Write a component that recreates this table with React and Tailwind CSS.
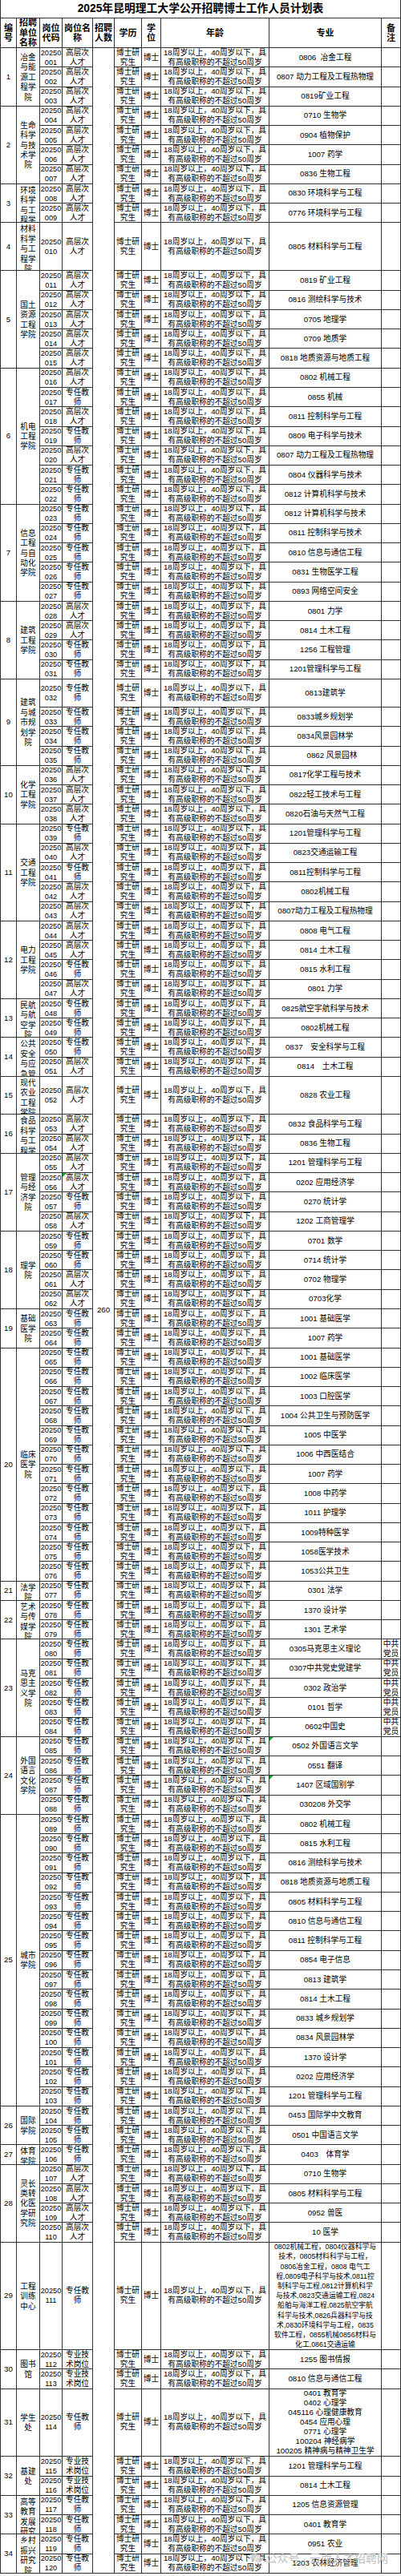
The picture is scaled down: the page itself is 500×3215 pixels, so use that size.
import React from 'react';

const G = ['高层次', '人才'];
const Z = ['专任教', '师'];
const J = ['专业技', '术岗位'];
const P = { r: true };

const TRAIN = [
  '0802机械工程，0804仪器科学与',
  '技术，0805材料科学与工程，',
  '0806冶金工程，0808 电气工',
  '程,0809电子科学与技术,0811控',
  '制科学与工程,0812计算机科学',
  '与技术,0823交通运输工程,0824',
  '船舶与海洋工程,0825航空宇航',
  '科学与技术,0826兵器科学与技',
  '术,0830环境科学与工程，0835',
  '软件工程，0855机械0856材料与',
  '化工,0861交通运输',
];

const STU = [
  '0401 教育学',
  '0402 心理学',
  '045116 心理健康教育',
  '0454 应用心理',
  '0771 心理学',
  '100204 神经病学',
  '100205 精神病与精神卫生学',
];

const UNITS = [
  ['冶金与能源工程学院', [[G, '0806  冶金工程'], [G, '0807 动力工程及工程热物理'], [G, '0819矿业工程']]],
  ['生命科学与技术学院', [[G, '0710 生物学'], [G, '0904 植物保护'], [G, '1007 药学'], [G, '0836 生物工程']]],
  ['环境科学与工程学院', [[G, '0830 环境科学与工程'], [G, '0776 环境科学与工程']]],
  ['材料科学与工程学院', [[G, '0805 材料科学与工程']]],
  ['国土资源工程学院', [[G, '0819 矿业工程'], [G, '0816 测绘科学与技术'], [G, '0705 地理学'], [G, '0709 地质学'], [G, '0818 地质资源与地质工程']]],
  ['机电工程学院', [[G, '0802 机械工程'], [Z, '0855 机械'], [G, '0811 控制科学与工程'], [Z, '0809 电子科学与技术'], [G, '0807 动力工程及工程热物理'], [Z, '0804 仪器科学与技术'], [Z, '0812 计算机科学与技术']]],
  ['信息工程与自动化学院', [[Z, '0812 计算机科学与技术'], [Z, '0811 控制科学与技术'], [Z, '0810 信息与通信工程'], [Z, '0831 生物医学工程'], [Z, '0893 网络空间安全']]],
  ['建筑工程学院', [[G, '0801 力学'], [G, '0814 土木工程'], [Z, '1256 工程管理'], [Z, '1201管理科学与工程']]],
  ['建筑与城市规划学院', [[Z, '0813建筑学'], [Z, '0833城乡规划学'], [Z, '0834风景园林学'], [Z, '0862 风景园林', { cls: 'pl-[17px]' }]]],
  ['化学工程学院', [[G, '0817化学工程与技术'], [G, '0822轻工技术与工程'], [G, '0820石油与天然气工程']]],
  ['交通工程学院', [[Z, '1201管理科学与工程'], [G, '0823交通运输工程'], [Z, '0811控制科学与工程'], [G, '0802机械工程'], [G, '0807动力工程及工程热物理']]],
  ['电力工程学院', [[G, '0808 电气工程'], [G, '0814 土木工程'], [Z, '0815 水利工程'], [G, '0801 力学']]],
  ['民航与航空学院', [[Z, '0825航空宇航科学与技术'], [Z, '0802机械工程']]],
  ['公共安全与应急管理学院', [[Z, '0837\u3000安全科学与工程'], [G, '0814\u3000土木工程']]],
  ['现代农业工程学院', [[G, '0828 农业工程']]],
  ['食品科学与工程学院', [[G, '0832 食品科学与工程'], [G, '0836 生物工程']]],
  ['管理与经济学院', [[G, '1201 管理科学与工程'], [G, '0202 应用经济学', { m4: true }], [Z, '0270 统计学'], [G, '1202 工商管理学']]],
  ['理学院', [[Z, '0701 数学'], [Z, '0714 统计学'], [G, '0702 物理学'], [G, '0703化学']]],
  ['基础医学院', [[Z, '1001 基础医学'], [Z, '1007 药学']]],
  ['临床医学院', [[Z, '1001 基础医学'], [Z, '1002 临床医学'], [Z, '1003 口腔医学'], [Z, '1004 公共卫生与预防医学'], [Z, '1005 中医学'], [Z, '1006 中西医结合'], [Z, '1007 药学'], [Z, '1008 中药学'], [Z, '1011 护理学'], [Z, '1009特种医学'], [Z, '1058医学技术'], [Z, '1053公共卫生']]],
  ['法学院', [[Z, '0301 法学']]],
  ['艺术与传媒学院', [[Z, '1370 设计学'], [Z, '1301 艺术学']]],
  ['马克思主义学院', [[Z, '0305马克思主义理论', P], [Z, '0307中共党史党建学', P], [Z, '0302 政治学', P], [Z, '0101 哲学', P], [Z, '0602中国史', P]]],
  ['外国语言文化学院', [[Z, '0502 外国语言文学', { m9: true }], [Z, '0551 翻译'], [Z, '1407 区域国别学', { m9: true }], [Z, '030208 外交学']]],
  ['城市学院', [[Z, '0802 机械工程'], [Z, '0815 水利工程'], [Z, '0816 测绘科学与技术'], [Z, '0818 地质资源与地质工程'], [Z, '0805 材料科学与工程'], [Z, '0810 信息与通信工程'], [Z, '0811 控制科学与工程'], [Z, '0854 电子信息'], [Z, '0813 建筑学'], [Z, '0814 土木工程'], [Z, '0833 城乡规划学'], [Z, '0834 风景园林学'], [Z, '1370 设计学'], [Z, '0202 应用经济学'], [Z, '1201 管理科学与工程']]],
  ['国际学院', [[Z, '0453 国际学中文教育'], [Z, '0501 中国语言文学']]],
  ['体育学院', [[Z, '0403\u3000体育学']]],
  ['灵长类转化医学研究院', [[G, '0710 生物学'], [G, '0805 材料科学与工程'], [G, '0952 兽医'], [G, '10 医学']]],
  ['工程训练中心', [[Z, TRAIN, { small: true }]]],
  ['图书馆', [[J, '1255 图书情报'], [J, '0810 信息与通信工程']]],
  ['学生处', [[Z, STU]]],
  ['基建处', [[J, '1201 管理科学与工程'], [J, '0814 土木工程']]],
  ['高等教育发展研究院', [[Z, '1205 信息资源管理'], [Z, '0401 教育学']]],
  ['乡村振兴研究院', [[Z, '0951 农业'], [Z, '1203 农林经济管理']]],
];

const RH = {
  10: 'h-[60px]',
  32: 'h-[35px]',
  52: 'h-[47.3px]',
  111: 'h-[134.3px]',
  114: 'h-[84.7px]',
};
const DEF_H = 'h-[24.28px]';

const SPAN = {
  1: '[grid-row:span_1/span_1]',
  2: '[grid-row:span_2/span_2]',
  3: '[grid-row:span_3/span_3]',
  4: '[grid-row:span_4/span_4]',
  5: '[grid-row:span_5/span_5]',
  7: '[grid-row:span_7/span_7]',
  12: '[grid-row:span_12/span_12]',
  15: '[grid-row:span_15/span_15]',
};

const LINE = 'border-r border-b border-[#333333]';

function Mark() {
  return (
    <span className="absolute left-0 top-0 w-0 h-0 border-t-[5px] border-r-[5px] border-t-[#1f9e3c] border-r-transparent" />
  );
}

function Cell({ col, h, className = '', mark, children }) {
  return (
    <div className={`${col} ${h} ${LINE} relative overflow-hidden flex flex-col items-center justify-center text-center ${className}`}>
      {mark && <Mark />}
      {children}
    </div>
  );
}

function SpanCell({ col, span, className = '', children }) {
  return (
    <div className={`${col} ${span} ${LINE}`}>
      <div className={`h-0 min-h-full overflow-hidden flex flex-col items-center [justify-content:safe_center] text-center ${className}`}>
        {children}
      </div>
    </div>
  );
}

function Lines({ items }) {
  return items.map((l, i) => (
    <span key={i} className="block whitespace-pre">
      {l}
    </span>
  ));
}

function Header() {
  const hc = 'h-[37px] font-bold text-[11px] leading-[12.4px]';
  return (
    <>
      <Cell col="col-start-1" h={hc}><Lines items={['编', '号']} /></Cell>
      <Cell col="col-start-2" h={hc}><Lines items={['招聘', '单位', '名称']} /></Cell>
      <Cell col="col-start-3" h={hc}><Lines items={['岗位', '代码']} /></Cell>
      <Cell col="col-start-4" h={hc}><Lines items={['岗位名', '称']} /></Cell>
      <Cell col="col-start-5" h={hc}><Lines items={['招聘', '人数']} /></Cell>
      <Cell col="col-start-6" h={hc}><Lines items={['学历']} /></Cell>
      <Cell col="col-start-7" h={hc}><Lines items={['学', '位']} /></Cell>
      <Cell col="col-start-8" h={hc}><Lines items={['年龄']} /></Cell>
      <Cell col="col-start-9" h={hc}><Lines items={['专业']} /></Cell>
      <Cell col="col-start-10" h={hc}><Lines items={['备', '注']} /></Cell>
    </>
  );
}

function Body() {
  const out = [];
  let idx = 0;
  UNITS.forEach(([name, rows], ui) => {
    rows.forEach(([post, major, opt = {}], ri) => {
      idx += 1;
      const code = String(idx).padStart(3, '0');
      const h = RH[idx] || DEF_H;
      if (ri === 0) {
        out.push(
          <SpanCell key={`n${ui}`} col="col-start-1" span={SPAN[rows.length]}>
            <span>{ui + 1}</span>
          </SpanCell>
        );
        out.push(
          <SpanCell key={`u${ui}`} col="col-start-2" span={SPAN[rows.length]} className="px-[3px] pt-[2px] leading-[12.4px] break-all">
            <span className="block w-[22px]">{name}</span>
          </SpanCell>
        );
      }
      out.push(
        <Cell key={`c${idx}`} col="col-start-3" h={h} className="text-[9.2px]">
          <Lines items={['20250', code]} />
        </Cell>
      );
      out.push(
        <Cell key={`p${idx}`} col="col-start-4" h={h} mark={opt.m4}>
          <Lines items={post} />
        </Cell>
      );
      if (idx === 1) {
        out.push(
          <SpanCell key="count" col="col-start-5" span="[grid-row:span_120/span_120]">
            <span>260</span>
          </SpanCell>
        );
      }
      out.push(
        <Cell key={`e${idx}`} col="col-start-6" h={h}>
          <Lines items={['博士研', '究生']} />
        </Cell>
      );
      out.push(
        <Cell key={`d${idx}`} col="col-start-7" h={h}>
          <span>博士</span>
        </Cell>
      );
      out.push(
        <Cell key={`a${idx}`} col="col-start-8" h={h}>
          <Lines items={['18周岁以上，40周岁以下，具', '有高级职称的不超过50周岁']} />
        </Cell>
      );
      out.push(
        <Cell
          key={`m${idx}`}
          col="col-start-9"
          h={h}
          mark={opt.m9}
          className={`${opt.small ? 'text-[8.8px] leading-[12.2px]' : ''} ${opt.cls || ''}`}
        >
          {Array.isArray(major) ? <Lines items={major} /> : <span className="whitespace-pre">{major}</span>}
        </Cell>
      );
      out.push(
        <Cell key={`r${idx}`} col="col-start-10" h={h}>
          {opt.r ? <Lines items={['中共', '党员']} /> : null}
        </Cell>
      );
    });
  });
  return out;
}

export default function App() {
  return (
    <div className="relative w-[500px] bg-white text-black font-['Liberation_Sans','Noto_Sans_CJK_SC',sans-serif]">
      <div className="h-[22px] border-l border-r border-[#333333] flex items-center justify-center">
        <h1 className="text-[13.8px] font-bold leading-none">2025年昆明理工大学公开招聘博士工作人员计划表</h1>
      </div>
      <div className="grid grid-cols-[20px_29px_28px_38px_27px_34px_24px_135px_140px_24px] border-l border-t border-[#333333] text-[9.7px] leading-[12px]">
        <Header />
        <Body />
      </div>
      <div className="absolute right-[16px] top-[3186px] flex items-center gap-[4px] text-[#bdbdbd] text-[14px] leading-none pointer-events-none">
        <svg width="16" height="14" viewBox="0 0 24 20" className="opacity-80">
          <ellipse cx="9" cy="8" rx="8.5" ry="7" fill="#c4c4c4" />
          <ellipse cx="16" cy="12.5" rx="7.5" ry="6" fill="#d4d4d4" stroke="#fff" strokeWidth="1" />
        </svg>
        <span>公众号 · 云南人才招聘网</span>
      </div>
    </div>
  );
}
